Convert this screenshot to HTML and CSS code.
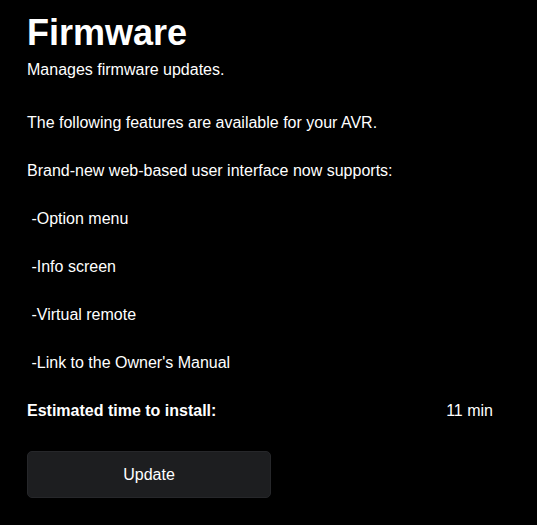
FILE: index.html
```html
<!DOCTYPE html>
<html lang="en">
<head>
    <meta charset="UTF-8">
    <meta name="viewport" content="width=device-width, initial-scale=1.0">
    <title>Firmware</title>
    <link rel="stylesheet" href="styles.css">
</head>
<body>
    <div class="page">
        <h1 class="pageTitle">Firmware</h1>
        <p class="pageDesc">Manages firmware updates.</p>
        <div class="infoList">
            <p>The following features are available for your AVR.</p>
            <p>Brand-new web-based user interface now supports:</p>
            <p>&nbsp;-Option menu</p>
            <p>&nbsp;-Info screen</p>
            <p>&nbsp;-Virtual remote</p>
            <p>&nbsp;-Link to the Owner's Manual</p>
            <div class="installRow">
                <span class="installLabel">Estimated time to install:</span>
                <span class="installValue">11 min</span>
            </div>
        </div>
        <button class="updateBtn" type="button">Update</button>
    </div>
</body>
</html>
```

FILE: styles.css
```css
html, body {
    margin: 0;
    background: #000;
    color: #fff;
    font-family: "Liberation Sans", Arial, sans-serif;
}

.page {
    padding: 13px 44px 0 27px;
}

.pageTitle {
    margin: 0;
    font-size: 36px;
    line-height: 40px;
    font-weight: bold;
}

.pageDesc {
    margin: 5px 0 0;
    font-size: 16px;
    line-height: 24px;
}

.infoList {
    display: flex;
    flex-direction: column;
    gap: 24px;
    margin-top: 29px;
    font-size: 16px;
    line-height: 24px;
}

.infoList p {
    margin: 0;
}

.installRow {
    display: flex;
    justify-content: space-between;
}

.installLabel {
    font-weight: bold;
}

.updateBtn {
    display: block;
    margin-top: 28px;
    width: 244px;
    height: 47px;
    background: #1d1e20;
    border: 1px solid #26272a;
    border-radius: 5px;
    color: #fff;
    font-family: inherit;
    font-size: 16px;
}
```
